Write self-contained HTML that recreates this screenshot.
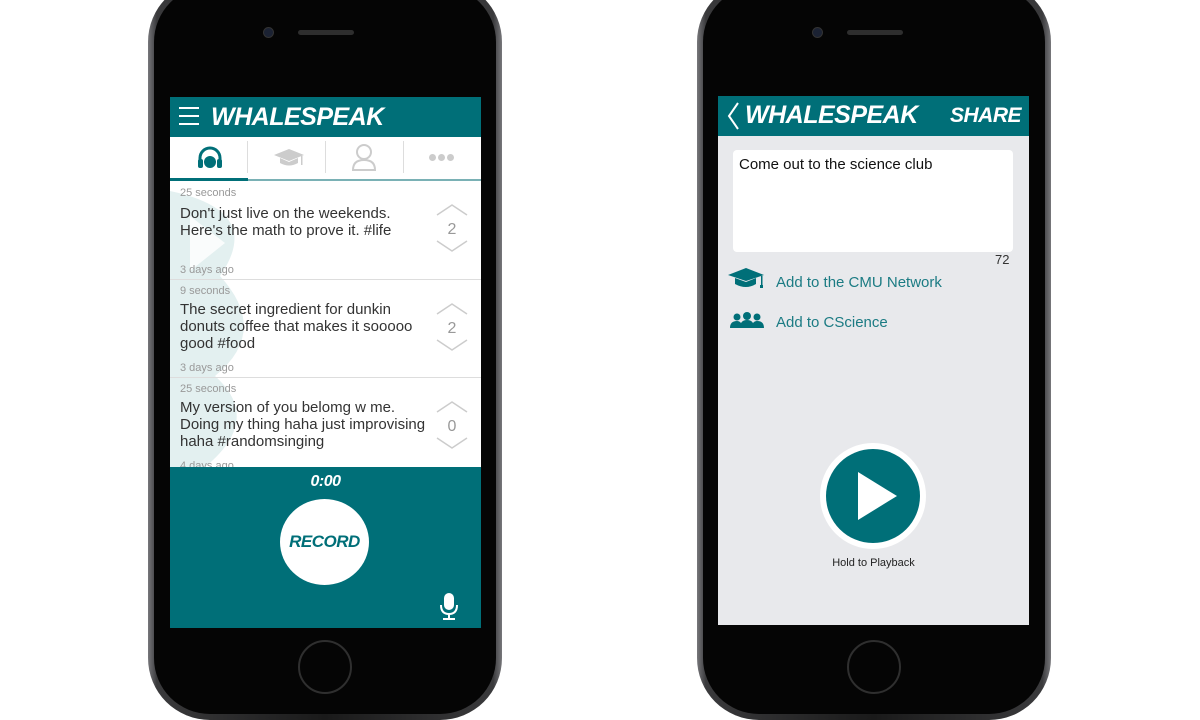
<!DOCTYPE html>
<html><head><style>
body{margin:0;width:1200px;height:700px;background:#fff;position:relative;overflow:hidden;font-family:"Liberation Sans",sans-serif}
.phone{position:absolute;top:-20px;width:354px;height:740px;border-radius:62px;background:linear-gradient(90deg,#77777b,#3a3a3c 2.5%,#1a1a1a 50%,#3a3a3c 97.5%,#77777b)}
.inner{position:absolute;left:6px;right:6px;top:6px;bottom:6px;border-radius:56px;background:#050505}
.screen{position:absolute;width:311px;height:531px;left:22px;overflow:hidden}
.cam{position:absolute;width:9px;height:9px;border-radius:50%;background:#1b2233;border:1px solid #333}
.spk{position:absolute;width:56px;height:5px;border-radius:3px;background:#2e2e2e}
.home{position:absolute;width:50px;height:50px;border-radius:50%;border:2px solid #2f2f2f}
.logo{font-family:"Liberation Sans",sans-serif;font-weight:bold;font-style:italic;color:#fff;letter-spacing:-0.5px}
.teal{background:#006f78}
.item{position:absolute;left:0;width:311px;border-bottom:1px solid #ddd}
.small{font-size:11px;color:#999;position:absolute;left:10px}
.txt{font-size:15px;color:#333;position:absolute;left:10px;line-height:17px}
.vote{position:absolute;left:266px;width:32px}
</style></head><body>

<div class="phone" style="left:148px">
<div class="inner"></div>
<div class="cam" style="left:115px;top:47px"></div>
<div class="spk" style="left:150px;top:50px"></div>
<div class="home" style="left:150px;top:660px"></div>
<div class="screen" style="top:117px;background:#fff">
 <svg style="position:absolute;left:0;top:84px" width="100" height="290" viewBox="0 0 100 290"><g fill="#e3f0f0"><path d="M0 10 Q95 30 50 95 Q100 150 45 195 Q95 240 30 290 L0 290Z"/></g><path d="M20 35 L55 62 L20 90Z" fill="#fff" opacity=".8"/></svg>
 <div class="teal" style="position:absolute;top:0;left:0;width:311px;height:40px">
  <div style="position:absolute;left:9px;top:10px;width:20px;height:2px;background:#fff;box-shadow:0 8px 0 #fff,0 16px 0 #fff"></div>
  <div class="logo" style="position:absolute;left:41px;top:6px;font-size:25px">WHALESPEAK</div>
 </div>
 <div style="position:absolute;top:40px;left:0;width:311px;height:42px;background:#fff;border-bottom:2px solid #7ab1b5">
  <div style="position:absolute;left:0;bottom:-2px;width:78px;height:3px;background:#006f78"></div>
  <div style="position:absolute;left:77px;top:4px;width:1px;height:32px;background:#ddd"></div>
  <div style="position:absolute;left:155px;top:4px;width:1px;height:32px;background:#ddd"></div>
  <div style="position:absolute;left:233px;top:4px;width:1px;height:32px;background:#ddd"></div>
  <svg style="position:absolute;left:25px;top:8px" width="30" height="26" viewBox="0 0 30 26"><path d="M5 18 V13 A10 10 0 0 1 25 13 V18" fill="none" stroke="#006f78" stroke-width="3"/><rect x="3" y="14" width="5" height="9" rx="2" fill="#006f78"/><rect x="22" y="14" width="5" height="9" rx="2" fill="#006f78"/><circle cx="15" cy="17" r="6" fill="#006f78"/></svg>
  <svg style="position:absolute;left:103px;top:12px" width="32" height="18" viewBox="0 0 32 18"><path d="M1 6 L16 0 L31 6 L16 12Z" fill="#ccc"/><path d="M7 9 V14 Q16 19 25 14 V9 L16 13Z" fill="#ccc"/><rect x="28" y="7" width="1.5" height="9" fill="#ccc"/></svg>
  <svg style="position:absolute;left:181px;top:6px" width="26" height="28" viewBox="0 0 26 28"><circle cx="13" cy="9" r="7" fill="none" stroke="#ccc" stroke-width="2"/><path d="M2 27 Q2 17 13 17 Q24 17 24 27Z" fill="none" stroke="#ccc" stroke-width="2"/></svg>
  <div style="position:absolute;left:259px;top:17px;width:7px;height:7px;border-radius:50%;background:#ccc;box-shadow:9px 0 0 #ccc,18px 0 0 #ccc"></div>
 </div>
 <div class="item" style="top:84px;height:98px"><div class="small" style="top:6px">25 seconds</div><div class="txt" style="top:24px">Don't just live on the weekends.<br>Here's the math to prove it. #life</div><div class="small" style="top:83px">3 days ago</div>
  <svg class="vote" style="top:22px" width="32" height="50" viewBox="0 0 32 50"><path d="M1 12 L16 2 L31 12 M1 38 L16 48 L31 38" fill="none" stroke="#ccc" stroke-width="1.5"/><text x="16" y="31" text-anchor="middle" font-size="16" fill="#999" font-family="Liberation Sans">2</text></svg></div>
 <div class="item" style="top:183px;height:97px"><div class="small" style="top:5px">9 seconds</div><div class="txt" style="top:21px">The secret ingredient for dunkin<br>donuts coffee that makes it sooooo<br>good #food</div><div class="small" style="top:82px">3 days ago</div>
  <svg class="vote" style="top:22px" width="32" height="50" viewBox="0 0 32 50"><path d="M1 12 L16 2 L31 12 M1 38 L16 48 L31 38" fill="none" stroke="#ccc" stroke-width="1.5"/><text x="16" y="31" text-anchor="middle" font-size="16" fill="#999" font-family="Liberation Sans">2</text></svg></div>
 <div class="item" style="top:281px;height:90px;border:0"><div class="small" style="top:5px">25 seconds</div><div class="txt" style="top:21px">My version of you belomg w me.<br>Doing my thing haha just improvising<br>haha #randomsinging</div><div class="small" style="top:82px">4 days ago</div>
  <svg class="vote" style="top:22px" width="32" height="50" viewBox="0 0 32 50"><path d="M1 12 L16 2 L31 12 M1 38 L16 48 L31 38" fill="none" stroke="#ccc" stroke-width="1.5"/><text x="16" y="31" text-anchor="middle" font-size="16" fill="#999" font-family="Liberation Sans">0</text></svg></div>
 <div class="teal" style="position:absolute;top:370px;left:0;width:311px;height:161px">
  <div class="logo" style="position:absolute;left:0;width:311px;text-align:center;top:6px;font-size:16px">0:00</div>
  <div style="position:absolute;left:110px;top:32px;width:89px;height:86px;border-radius:50%;background:#fff"></div>
  <div class="logo" style="position:absolute;left:110px;width:89px;text-align:center;top:65px;font-size:17px;color:#006f78">RECORD</div>
  <svg style="position:absolute;left:269px;top:126px" width="20" height="28" viewBox="0 0 20 28"><rect x="5" y="0" width="10" height="17" rx="5" fill="#fff"/><path d="M2 12 Q2 21 10 21 Q18 21 18 12" fill="none" stroke="#fff" stroke-width="2"/><rect x="9" y="21" width="2" height="5" fill="#fff"/><rect x="4" y="25" width="12" height="2" fill="#fff"/></svg>
 </div>
</div>
</div>

<div class="phone" style="left:697px">
<div class="inner"></div>
<div class="cam" style="left:115px;top:47px"></div>
<div class="spk" style="left:150px;top:50px"></div>
<div class="home" style="left:150px;top:660px"></div>
<div class="screen" style="top:116px;height:529px;background:#e8e9ec;left:21px">
 <div class="teal" style="position:absolute;top:0;left:0;width:311px;height:40px">
  <svg style="position:absolute;left:8px;top:6px" width="14" height="28" viewBox="0 0 14 28"><path d="M12 1 L3 14 L12 27" fill="none" stroke="#fff" stroke-width="2"/></svg>
  <div class="logo" style="position:absolute;left:27px;top:5px;font-size:25px">WHALESPEAK</div>
  <div class="logo" style="position:absolute;right:8px;top:8px;font-size:21px">SHARE</div>
 </div>
 <div style="position:absolute;left:15px;top:54px;width:280px;height:102px;background:#fff;border-radius:4px"></div>
 <div style="position:absolute;left:21px;top:60px;font-size:15px;color:#111">Come out to the science club</div>
 <div style="position:absolute;left:277px;top:156px;font-size:13px;color:#333">72</div>
 <svg style="position:absolute;left:10px;top:172px" width="38" height="22" viewBox="0 0 38 22"><path d="M0 7 L18 0 L36 7 L18 13Z" fill="#006f78"/><path d="M7 10 V16 Q18 22 28 16 V10 L18 14Z" fill="#006f78"/><rect x="33" y="8" width="1.5" height="10" fill="#006f78"/><rect x="32" y="17" width="3" height="3" fill="#006f78"/></svg>
 <div style="position:absolute;left:58px;top:178px;font-size:15px;color:#1b7b83">Add to the CMU Network</div>
 <svg style="position:absolute;left:12px;top:216px" width="34" height="16" viewBox="0 0 34 16"><g fill="#006f78"><circle cx="7" cy="5" r="3.5"/><circle cx="17" cy="4" r="4"/><circle cx="27" cy="5" r="3.5"/><path d="M0 16 Q0 9 7 9 Q12 9 12 16Z"/><path d="M10 16 Q10 8 17 8 Q24 8 24 16Z"/><path d="M22 16 Q22 9 27 9 Q34 9 34 16Z"/></g></svg>
 <div style="position:absolute;left:58px;top:218px;font-size:15px;color:#1b7b83">Add to CScience</div>
 <div style="position:absolute;left:102px;top:347px;width:106px;height:106px;border-radius:50%;background:#fff"></div>
 <div class="teal" style="position:absolute;left:108px;top:353px;width:94px;height:94px;border-radius:50%"></div>
 <svg style="position:absolute;left:137px;top:374px" width="44" height="52" viewBox="0 0 44 52"><path d="M3 2 L42 26 L3 50Z" fill="#fff"/></svg>
 <div style="position:absolute;left:0;width:311px;text-align:center;top:461px;font-size:11px;color:#222">Hold to Playback</div>
</div>
</div>

</body></html>
